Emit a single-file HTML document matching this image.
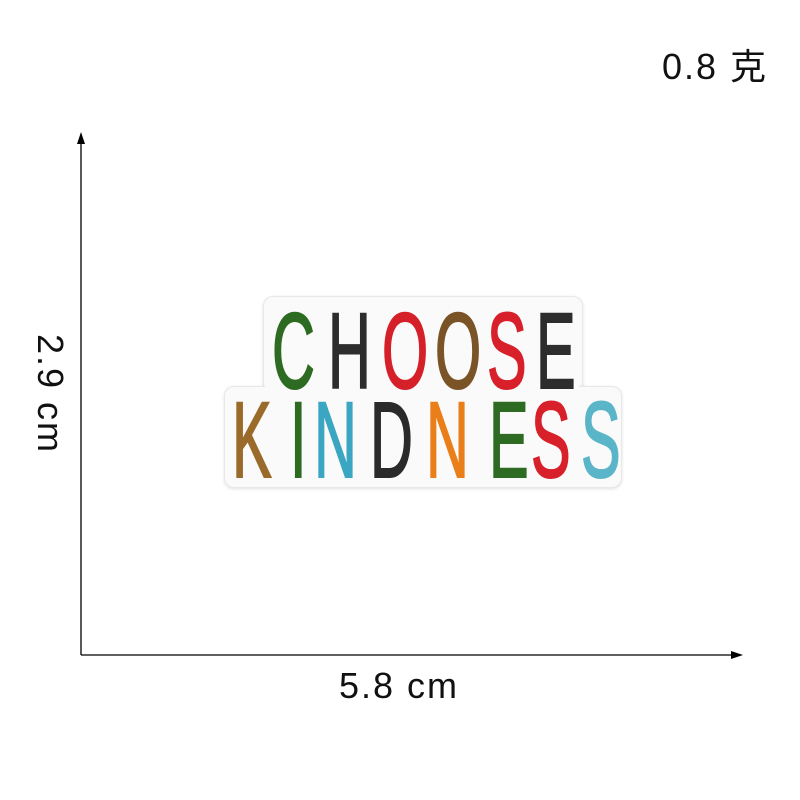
<!DOCTYPE html>
<html><head><meta charset="utf-8"><style>
body{margin:0;width:800px;height:800px;background:#fff;position:relative;overflow:hidden;font-family:"Liberation Sans","Noto Sans CJK SC",sans-serif}
.t{position:absolute;color:#111;font-size:36px;letter-spacing:2px;line-height:1;white-space:nowrap}
.patch{position:absolute;background:#fafafa;border:1px solid #e8e8e8;border-radius:10px;box-shadow:0 1px 3px rgba(0,0,0,.12)}
.l{position:absolute;font-weight:normal;font-size:108px;line-height:1;transform-origin:0 0;transform:scaleX(.55);font-family:"Liberation Sans",sans-serif;-webkit-text-stroke:2px currentColor}
</style></head><body>
<div class="t" style="left:662px;top:49px">0.8 克</div>
<div class="t" style="left:339px;top:668px">5.8 cm</div>
<div class="t" style="top:378px;transform:rotate(90deg);transform-origin:50% 50%;width:124px;left:-12px">2.9 cm</div>
<svg width="800" height="800" style="position:absolute;left:0;top:0">
<line x1="81" y1="140" x2="81" y2="655" stroke="#000" stroke-width="1.3"/>
<polygon points="81,132 77,144 85,144" fill="#000"/>
<line x1="81" y1="655" x2="735" y2="655" stroke="#000" stroke-width="1.3"/>
<polygon points="743,655 731,651 731,659" fill="#000"/>
</svg>
<div class="patch" style="left:263px;top:296px;width:318px;height:100px"></div>
<div class="patch" style="left:224px;top:386px;width:396px;height:100px"></div>
<div class="patch" style="left:265px;top:298px;width:314px;height:110px;border:none;box-shadow:none"></div>
<div class="l" style="left:272px;top:297px;color:#2e6b22">C</div>
<div class="l" style="left:328px;top:297px;color:#2d2d2d">H</div>
<div class="l" style="left:382px;top:297px;color:#d5202a">O</div>
<div class="l" style="left:435px;top:297px;color:#7a5327">O</div>
<div class="l" style="left:487px;top:297px;color:#d7202a">S</div>
<div class="l" style="left:536px;top:297px;color:#2d2d2d">E</div>
<div class="l" style="left:232px;top:386px;color:#9a6a2a">K</div>
<div class="l" style="left:290px;top:386px;color:#2e6b22">I</div>
<div class="l" style="left:314px;top:386px;color:#3aa6c2">N</div>
<div class="l" style="left:370px;top:386px;color:#2a2a2a">D</div>
<div class="l" style="left:426px;top:386px;color:#ea7f1a">N</div>
<div class="l" style="left:489px;top:386px;color:#2e6b22">E</div>
<div class="l" style="left:531px;top:386px;color:#d7202a">S</div>
<div class="l" style="left:581px;top:386px;color:#5ab5c8">S</div>
</body></html>
